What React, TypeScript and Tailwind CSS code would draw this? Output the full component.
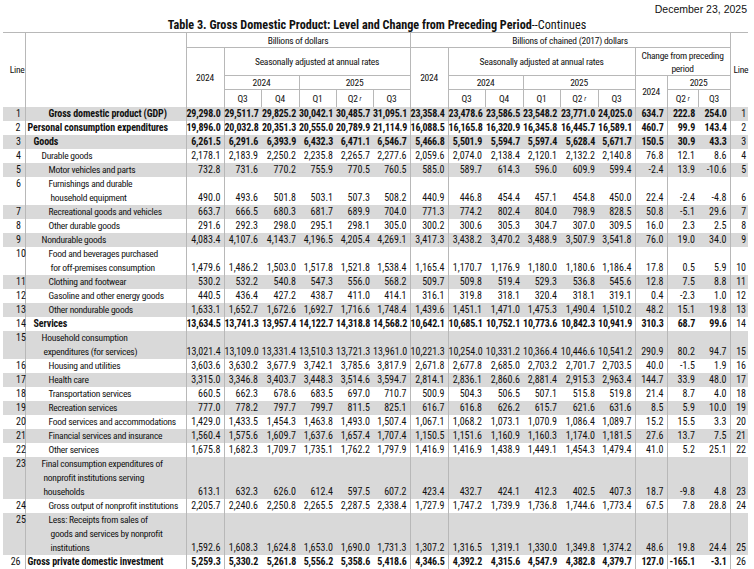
import React from "react";

type Row = {
  n: number;
  lines: string[];
  lvl: "gdp" | 0 | 1 | 2 | 3;
  bold?: boolean;
  v: string;
};

const rows: Row[] = [
  { n: 1, lines: ["Gross domestic product (GDP)"], lvl: "gdp", bold: true, v: "29,298.0|29,511.7|29,825.2|30,042.1|30,485.7|31,095.1|23,358.4|23,478.6|23,586.5|23,548.2|23,771.0|24,025.0|634.7|222.8|254.0" },
  { n: 2, lines: ["Personal consumption expenditures"], lvl: 0, bold: true, v: "19,896.0|20,032.8|20,351.3|20,555.0|20,789.9|21,114.9|16,088.5|16,165.8|16,320.9|16,345.8|16,445.7|16,589.1|460.7|99.9|143.4" },
  { n: 3, lines: ["Goods"], lvl: 1, bold: true, v: "6,261.5|6,291.6|6,393.9|6,432.3|6,471.1|6,546.7|5,466.8|5,501.9|5,594.7|5,597.4|5,628.4|5,671.7|150.5|30.9|43.3" },
  { n: 4, lines: ["Durable goods"], lvl: 2, v: "2,178.1|2,183.9|2,250.2|2,235.8|2,265.7|2,277.6|2,059.6|2,074.0|2,138.4|2,120.1|2,132.2|2,140.8|76.8|12.1|8.6" },
  { n: 5, lines: ["Motor vehicles and parts"], lvl: 3, v: "732.8|731.6|770.2|755.9|770.5|760.5|585.0|589.7|614.3|596.0|609.9|599.4|-2.4|13.9|-10.6" },
  { n: 6, lines: ["Furnishings and durable", "household equipment"], lvl: 3, v: "490.0|493.6|501.8|503.1|507.3|508.2|440.9|446.8|454.4|457.1|454.8|450.0|22.4|-2.4|-4.8" },
  { n: 7, lines: ["Recreational goods and vehicles"], lvl: 3, v: "663.7|666.5|680.3|681.7|689.9|704.0|771.3|774.2|802.4|804.0|798.9|828.5|50.8|-5.1|29.6" },
  { n: 8, lines: ["Other durable goods"], lvl: 3, v: "291.6|292.3|298.0|295.1|298.1|305.0|300.2|300.6|305.3|304.7|307.0|309.5|16.0|2.3|2.5" },
  { n: 9, lines: ["Nondurable goods"], lvl: 2, v: "4,083.4|4,107.6|4,143.7|4,196.5|4,205.4|4,269.1|3,417.3|3,438.2|3,470.2|3,488.9|3,507.9|3,541.8|76.0|19.0|34.0" },
  { n: 10, lines: ["Food and beverages purchased", "for off-premises consumption"], lvl: 3, v: "1,479.6|1,486.2|1,503.0|1,517.8|1,521.8|1,538.4|1,165.4|1,170.7|1,176.9|1,180.0|1,180.6|1,186.4|17.8|0.5|5.9" },
  { n: 11, lines: ["Clothing and footwear"], lvl: 3, v: "530.2|532.2|540.8|547.3|556.0|568.2|509.7|509.8|519.4|529.3|536.8|545.6|12.8|7.5|8.8" },
  { n: 12, lines: ["Gasoline and other energy goods"], lvl: 3, v: "440.5|436.4|427.2|438.7|411.0|414.1|316.1|319.8|318.1|320.4|318.1|319.1|0.4|-2.3|1.0" },
  { n: 13, lines: ["Other nondurable goods"], lvl: 3, v: "1,633.1|1,652.7|1,672.6|1,692.7|1,716.6|1,748.4|1,439.6|1,451.1|1,471.0|1,475.3|1,490.4|1,510.2|48.2|15.1|19.8" },
  { n: 14, lines: ["Services"], lvl: 1, bold: true, v: "13,634.5|13,741.3|13,957.4|14,122.7|14,318.8|14,568.2|10,642.1|10,685.1|10,752.1|10,773.6|10,842.3|10,941.9|310.3|68.7|99.6" },
  { n: 15, lines: ["Household consumption", "expenditures (for services)"], lvl: 2, v: "13,021.4|13,109.0|13,331.4|13,510.3|13,721.3|13,961.0|10,221.3|10,254.0|10,331.2|10,366.4|10,446.6|10,541.2|290.9|80.2|94.7" },
  { n: 16, lines: ["Housing and utilities"], lvl: 3, v: "3,603.6|3,630.2|3,677.9|3,742.1|3,785.6|3,817.9|2,671.8|2,677.8|2,685.0|2,703.2|2,701.7|2,703.5|40.0|-1.5|1.9" },
  { n: 17, lines: ["Health care"], lvl: 3, v: "3,315.0|3,346.8|3,403.7|3,448.3|3,514.6|3,594.7|2,814.1|2,836.1|2,860.6|2,881.4|2,915.3|2,963.4|144.7|33.9|48.0" },
  { n: 18, lines: ["Transportation services"], lvl: 3, v: "660.5|662.3|678.6|683.5|697.0|710.7|500.9|504.3|506.5|507.1|515.8|519.8|21.4|8.7|4.0" },
  { n: 19, lines: ["Recreation services"], lvl: 3, v: "777.0|778.2|797.7|799.7|811.5|825.1|616.7|616.8|626.2|615.7|621.6|631.6|8.5|5.9|10.0" },
  { n: 20, lines: ["Food services and accommodations"], lvl: 3, v: "1,429.0|1,433.5|1,454.3|1,463.8|1,493.0|1,507.4|1,067.1|1,068.2|1,073.1|1,070.9|1,086.4|1,089.7|15.2|15.5|3.3" },
  { n: 21, lines: ["Financial services and insurance"], lvl: 3, v: "1,560.4|1,575.6|1,609.7|1,637.6|1,657.4|1,707.4|1,150.5|1,151.6|1,160.9|1,160.3|1,174.0|1,181.5|27.6|13.7|7.5" },
  { n: 22, lines: ["Other services"], lvl: 3, v: "1,675.8|1,682.3|1,709.7|1,735.1|1,762.2|1,797.9|1,416.9|1,416.9|1,438.9|1,449.1|1,454.3|1,479.4|41.0|5.2|25.1" },
  { n: 23, lines: ["Final consumption expenditures of", "nonprofit institutions serving", "households"], lvl: 2, v: "613.1|632.3|626.0|612.4|597.5|607.2|423.4|432.7|424.1|412.3|402.5|407.3|18.7|-9.8|4.8" },
  { n: 24, lines: ["Gross output of nonprofit institutions"], lvl: 3, v: "2,205.7|2,240.6|2,250.8|2,265.5|2,287.5|2,338.4|1,727.9|1,747.2|1,739.9|1,736.8|1,744.6|1,773.4|67.5|7.8|28.8" },
  { n: 25, lines: ["Less: Receipts from sales of", "goods and services by nonprofit", "institutions"], lvl: 3, v: "1,592.6|1,608.3|1,624.8|1,653.0|1,690.0|1,731.3|1,307.2|1,316.5|1,319.1|1,330.0|1,349.8|1,374.2|48.6|19.8|24.4" },
  { n: 26, lines: ["Gross private domestic investment"], lvl: 0, bold: true, v: "5,259.3|5,330.2|5,261.8|5,556.2|5,358.6|5,418.6|4,346.5|4,392.2|4,315.6|4,547.9|4,382.8|4,379.7|127.0|-165.1|-3.1" },
];

const widths = [22, 161, 38, 37, 38, 37, 37, 37, 38, 37, 38, 37, 38, 37, 32, 31, 32, 18];

const B = "border-[#b8b8b8]";

const valBorder: Record<number, string> = {
  0: "border-r border-[#b8b8b8]",
  5: "border-r border-[#b8b8b8]",
  6: "border-r border-[#b8b8b8]",
  11: "border-r border-[#b8b8b8]",
  12: "border-r border-[#b8b8b8]",
  14: "border-r border-[#b8b8b8]",
};

const firstLine = {
  gdp: "pl-[23px]",
  0: "pl-[2px]",
  1: "pl-[8px]",
  2: "pl-[16px]",
  3: "pl-[23px]",
} as const;
const nextLine = {
  gdp: "pl-[25px]",
  0: "pl-[4px]",
  1: "pl-[10px]",
  2: "pl-[18px]",
  3: "pl-[25px]",
} as const;

const H = "font-normal text-center p-0 text-[9.5px] tracking-[-0.25px]";

function Q({ q, r }: { q: string; r?: boolean }) {
  return (
    <th className={`${H} h-[17px] border-r ${B}`}>
      {q}
      {r && <sup className="italic text-[6.5px] ml-[2px] relative -top-[1px]">r</sup>}
    </th>
  );
}

export default function App() {
  return (
    <div className="w-[754px] h-[569px] overflow-hidden bg-white text-[#111] font-['Roboto_Condensed','Liberation_Sans_Narrow',sans-serif] text-[10px]">
      <div className="h-[16px] leading-[14px] text-right pr-[7px] pt-[2px] text-[10.5px] font-['Liberation_Sans',sans-serif]">
        December 23, 2025
      </div>
      <div className="h-[16px] leading-[14px] pt-[2px] text-center text-[12.2px]">
        <span className="font-bold">Table 3. Gross Domestic Product: Level and Change from Preceding Period</span>
        <span>--Continues</span>
      </div>
      <table className="ml-[3px] border-collapse table-fixed w-[745px]">
        <colgroup>
          {widths.map((w, i) => (
            <col key={i} style={{ width: w }} />
          ))}
        </colgroup>
        <thead className="leading-[11px]">
          <tr className={`border-t ${B}`}>
            <th rowSpan={4} className={`${H} align-middle border-r ${B}`}>
              <span className="text-right block">Line</span>
            </th>
            <th rowSpan={4} className={`p-0 border-r ${B}`}></th>
            <th colSpan={6} className={`${H} h-[15px] border-r border-b ${B}`}>Billions of dollars</th>
            <th colSpan={9} className={`${H} h-[15px] border-r border-b ${B}`}>Billions of chained (2017) dollars</th>
            <th rowSpan={4} className={`${H} align-middle`}>
              <span className="text-left block pl-[3px]">Line</span>
            </th>
          </tr>
          <tr>
            <th rowSpan={3} className={`${H} border-r ${B}`}>2024</th>
            <th colSpan={5} className={`${H} h-[28px] border-r border-b ${B}`}>Seasonally adjusted at annual rates</th>
            <th rowSpan={3} className={`${H} border-r ${B}`}>2024</th>
            <th colSpan={5} className={`${H} border-r border-b ${B}`}>Seasonally adjusted at annual rates</th>
            <th colSpan={3} className={`${H} border-r border-b ${B} leading-[13px]`}>
              Change from preceding
              <br />
              period
            </th>
          </tr>
          <tr>
            <th colSpan={2} className={`${H} h-[14px] border-r border-b ${B}`}>2024</th>
            <th colSpan={3} className={`${H} border-r border-b ${B}`}>2025</th>
            <th colSpan={2} className={`${H} border-r border-b ${B}`}>2024</th>
            <th colSpan={3} className={`${H} border-r border-b ${B}`}>2025</th>
            <th rowSpan={2} className={`${H} border-r ${B}`}>2024</th>
            <th colSpan={2} className={`${H} border-r border-b ${B}`}>2025</th>
          </tr>
          <tr>
            <Q q="Q3" />
            <Q q="Q4" />
            <Q q="Q1" />
            <Q q="Q2" r />
            <Q q="Q3" />
            <Q q="Q3" />
            <Q q="Q4" />
            <Q q="Q1" />
            <Q q="Q2" r />
            <Q q="Q3" />
            <Q q="Q2" r />
            <Q q="Q3" />
          </tr>
        </thead>
        <tbody className="leading-[14px]">
          {rows.map((r) => {
            const vals = r.v.split("|");
            const bg = r.n % 2 === 1 ? "bg-[#d9d9d9]" : "bg-white";
            const w = r.bold ? "font-bold tracking-[-0.2px]" : "font-normal";
            const dw = r.bold ? "font-bold tracking-[-0.1px]" : "font-normal text-[9.5px] tracking-[-0.25px]";
            const leftNum = r.n === 2 || r.n === 26 ? "text-right pr-[4px]" : "text-left pl-[13px]";
            return (
              <tr key={r.n} className={`${bg} h-[14px]`}>
                <td className={`align-top p-0 border-r ${B} ${leftNum}`}>{r.n}</td>
                <td className={`align-top p-0 border-r ${B} ${dw} whitespace-nowrap`}>
                  {r.lines.map((l, i) => (
                    <div key={i} className={i === 0 ? firstLine[r.lvl] : nextLine[r.lvl]}>
                      {l}
                    </div>
                  ))}
                </td>
                {vals.map((v, i) => (
                  <td key={i} className={`align-bottom p-0 pr-[3px] text-right whitespace-nowrap ${w} ${valBorder[i] ?? ""}`}>
                    {v}
                  </td>
                ))}
                <td className="align-bottom p-0 pr-[2px] text-right">{r.n}</td>
              </tr>
            );
          })}
        </tbody>
      </table>
    </div>
  );
}
